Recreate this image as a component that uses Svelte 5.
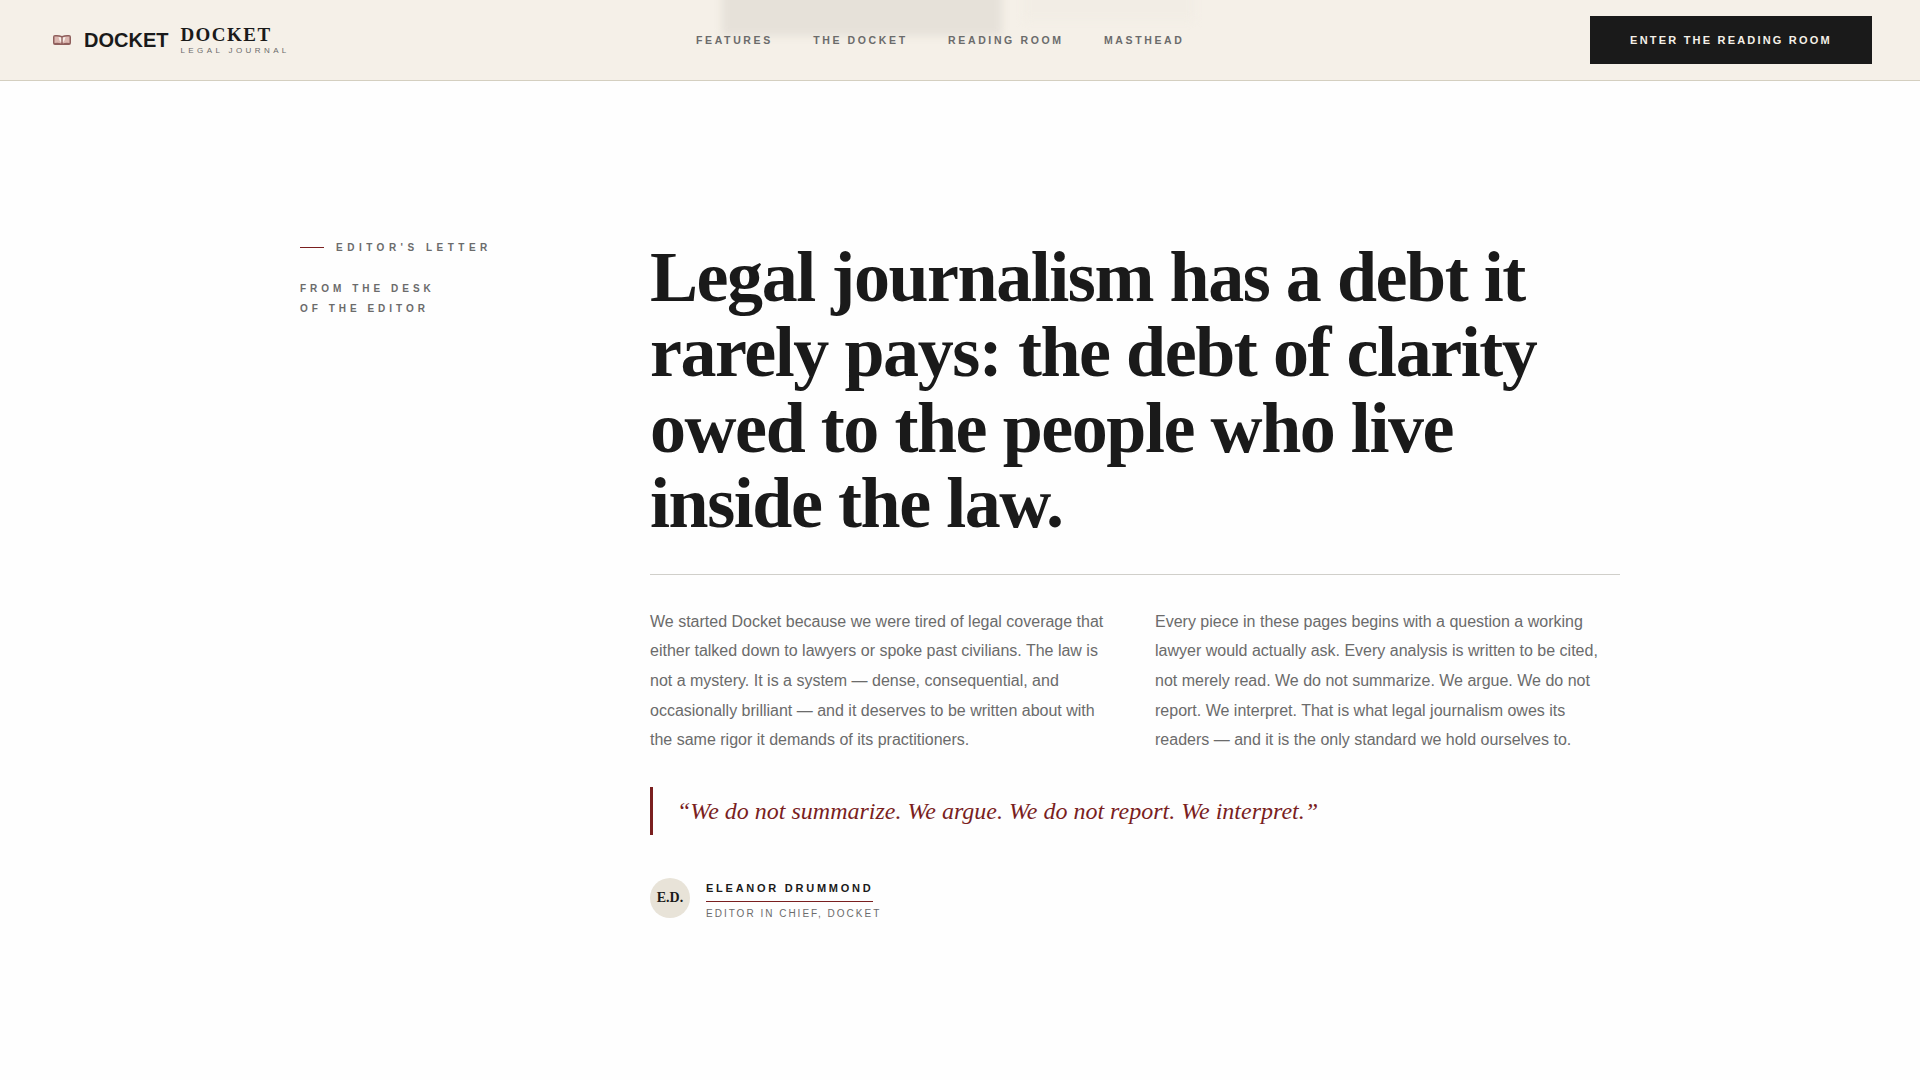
<script>
    const links = ['Features', 'The Docket', 'Reading Room', 'Masthead'];
</script>

<header class="nav">
    <div class="ghost ghost-dark"></div>
    <div class="ghost ghost-light"></div>
    <div class="brand">
        <svg class="book" viewBox="0 0 20 12" width="20" height="12" aria-hidden="true">
            <path d="M1 3 Q1 1 3 1 Q7 0.5 10 2 Q13 0.5 17 1 Q19 1 19 3 V9 Q19 11 17 11 H3 Q1 11 1 9 Z" fill="#8f5f5c"/>
            <path d="M2.5 2.5 Q7 2 9.2 3.5 V9.5 Q7 8.5 2.5 9 Z M17.5 2.5 Q13 2 10.8 3.5 V9.5 Q13 8.5 17.5 9 Z" fill="#dcb8b1"/>
            <path d="M6.5 3 L9.2 3.5 V8.5 L7.5 6.5 Z M13.5 3 L10.8 3.5 V8.5 L12.5 6.5 Z" fill="#f7eee8"/>
        </svg>
        <span class="word">DOCKET</span>
        <div class="mark">
            <span class="mark-name">DOCKET</span>
            <span class="mark-sub">LEGAL JOURNAL</span>
        </div>
    </div>
    <nav class="links">
        {#each links as link}
            <span>{link}</span>
        {/each}
    </nav>
    <button class="cta">ENTER THE READING ROOM</button>
</header>

<main class="letter">
    <aside class="side">
        <div class="eyebrow"><i></i>EDITOR'S LETTER</div>
        <p class="desk">FROM THE DESK<br />OF THE EDITOR</p>
    </aside>
    <article class="body">
        <h1>Legal journalism has a debt it rarely pays: the debt of clarity owed to the people who live inside the law.</h1>
        <hr />
        <div class="cols">
            <p>We started Docket because we were tired of legal coverage that either talked down to lawyers or spoke past civilians. The law is not a mystery. It is a system — dense, consequential, and occasionally brilliant — and it deserves to be written about with the same rigor it demands of its practitioners.</p>
            <p>Every piece in these pages begins with a question a working lawyer would actually ask. Every analysis is written to be cited, not merely read. We do not summarize. We argue. We do not report. We interpret. That is what legal journalism owes its readers — and it is the only standard we hold ourselves to.</p>
        </div>
        <blockquote>“We do not summarize. We argue. We do not report. We interpret.”</blockquote>
        <div class="sign">
            <div class="avatar">E.D.</div>
            <div class="who">
                <div class="name">ELEANOR DRUMMOND</div>
                <div class="role">EDITOR IN CHIEF, DOCKET</div>
            </div>
        </div>
    </article>
</main>

<style>
    :global(body) {
        background: #fefefe;
        font-family: "Liberation Sans", Arial, sans-serif;
    }

    .nav {
        position: relative;
        height: 80px;
        overflow: hidden;
        display: flex;
        align-items: center;
        justify-content: space-between;
        padding: 0 48px 0 52px;
        background: #f5f0e8;
        border-bottom: 1px solid #d4cfc0;
    }

    .ghost {
        position: absolute;
        top: -10px;
        filter: blur(4px);
    }

    .ghost-dark {
        left: 722px;
        width: 280px;
        height: 46px;
        background: #e6e1d9;
    }

    .ghost-light {
        left: 1024px;
        width: 170px;
        height: 30px;
        background: #f2ede5;
    }

    .brand {
        position: relative;
        display: flex;
        align-items: center;
    }

    .book {
        margin-right: 12px;
    }

    .word {
        font-size: 20px;
        font-weight: 700;
        color: #1a1a1a;
        margin-right: 12px;
    }

    .mark {
        display: flex;
        flex-direction: column;
        margin-top: -1px;
    }

    .mark-name {
        font-family: "Liberation Serif", serif;
        font-size: 19px;
        font-weight: 700;
        letter-spacing: 1.45px;
        line-height: 20px;
        color: #1a1a1a;
    }

    .mark-sub {
        padding-top: 1px;
        font-size: 8px;
        letter-spacing: 3.4px;
        line-height: 9px;
        color: #6b6b6b;
    }

    .links {
        position: absolute;
        left: 696px;
        display: flex;
        gap: 40.4px;
        font-size: 10.5px;
        font-weight: 700;
        letter-spacing: 0.25em;
        color: #6b6b6b;
        text-transform: uppercase;
    }

    .cta {
        position: relative;
        width: 282px;
        height: 48px;
        border: 0;
        background: #1a1a1a;
        color: #f5f0e8;
        font-family: inherit;
        font-size: 11px;
        font-weight: 700;
        letter-spacing: 0.2em;
    }

    .letter {
        display: grid;
        grid-template-columns: 350px 970px;
        width: 1320px;
        margin: 0 auto;
        padding-top: 158.5px;
    }

    .eyebrow {
        display: flex;
        align-items: center;
        font-size: 10px;
        font-weight: 700;
        letter-spacing: 0.45em;
        color: #6b6b6b;
        margin-top: 2px;
    }

    .eyebrow i {
        width: 24px;
        height: 1px;
        margin-right: 12px;
        background: #7a1f1f;
    }

    .desk {
        margin: 26px 0 0;
        font-size: 10px;
        font-weight: 700;
        letter-spacing: 0.4em;
        line-height: 20px;
        color: #6b6b6b;
    }

    h1 {
        margin: 0;
        font-family: "Liberation Serif", serif;
        font-size: 72px;
        font-weight: 700;
        line-height: 75.6px;
        letter-spacing: -0.02em;
        color: #1a1a1a;
    }

    hr {
        height: 1px;
        margin: 32px 0;
        border: 0;
        background: #d0cfca;
    }

    .cols {
        display: grid;
        grid-template-columns: 1fr 1fr;
        gap: 40px;
    }

    .cols p {
        margin: 0;
        font-size: 16px;
        line-height: 29.6px;
        color: #6b6b6b;
    }

    blockquote {
        margin: 32px 0 0;
        padding: 8px 0 8px 24px;
        border-left: 3px solid #7a1f1f;
        font-family: "Liberation Serif", serif;
        font-size: 24px;
        font-style: italic;
        line-height: 32px;
        color: #7a1f1f;
    }

    .sign {
        display: flex;
        align-items: center;
        gap: 16px;
        margin-top: 42px;
    }

    .avatar {
        width: 40px;
        height: 40px;
        border-radius: 50%;
        display: flex;
        align-items: center;
        justify-content: center;
        background: #e8e3d8;
        font-family: "Liberation Serif", serif;
        font-size: 14px;
        font-weight: 700;
        color: #1a1a1a;
    }

    .who {
        padding-top: 5px;
    }

    .name {
        width: fit-content;
        padding-bottom: 7px;
        border-bottom: 1px solid #7a1f1f;
        font-size: 11px;
        font-weight: 700;
        letter-spacing: 0.25em;
        color: #1a1a1a;
    }

    .role {
        margin-top: 6px;
        font-size: 10px;
        letter-spacing: 0.2em;
        color: #6b6b6b;
    }
</style>
